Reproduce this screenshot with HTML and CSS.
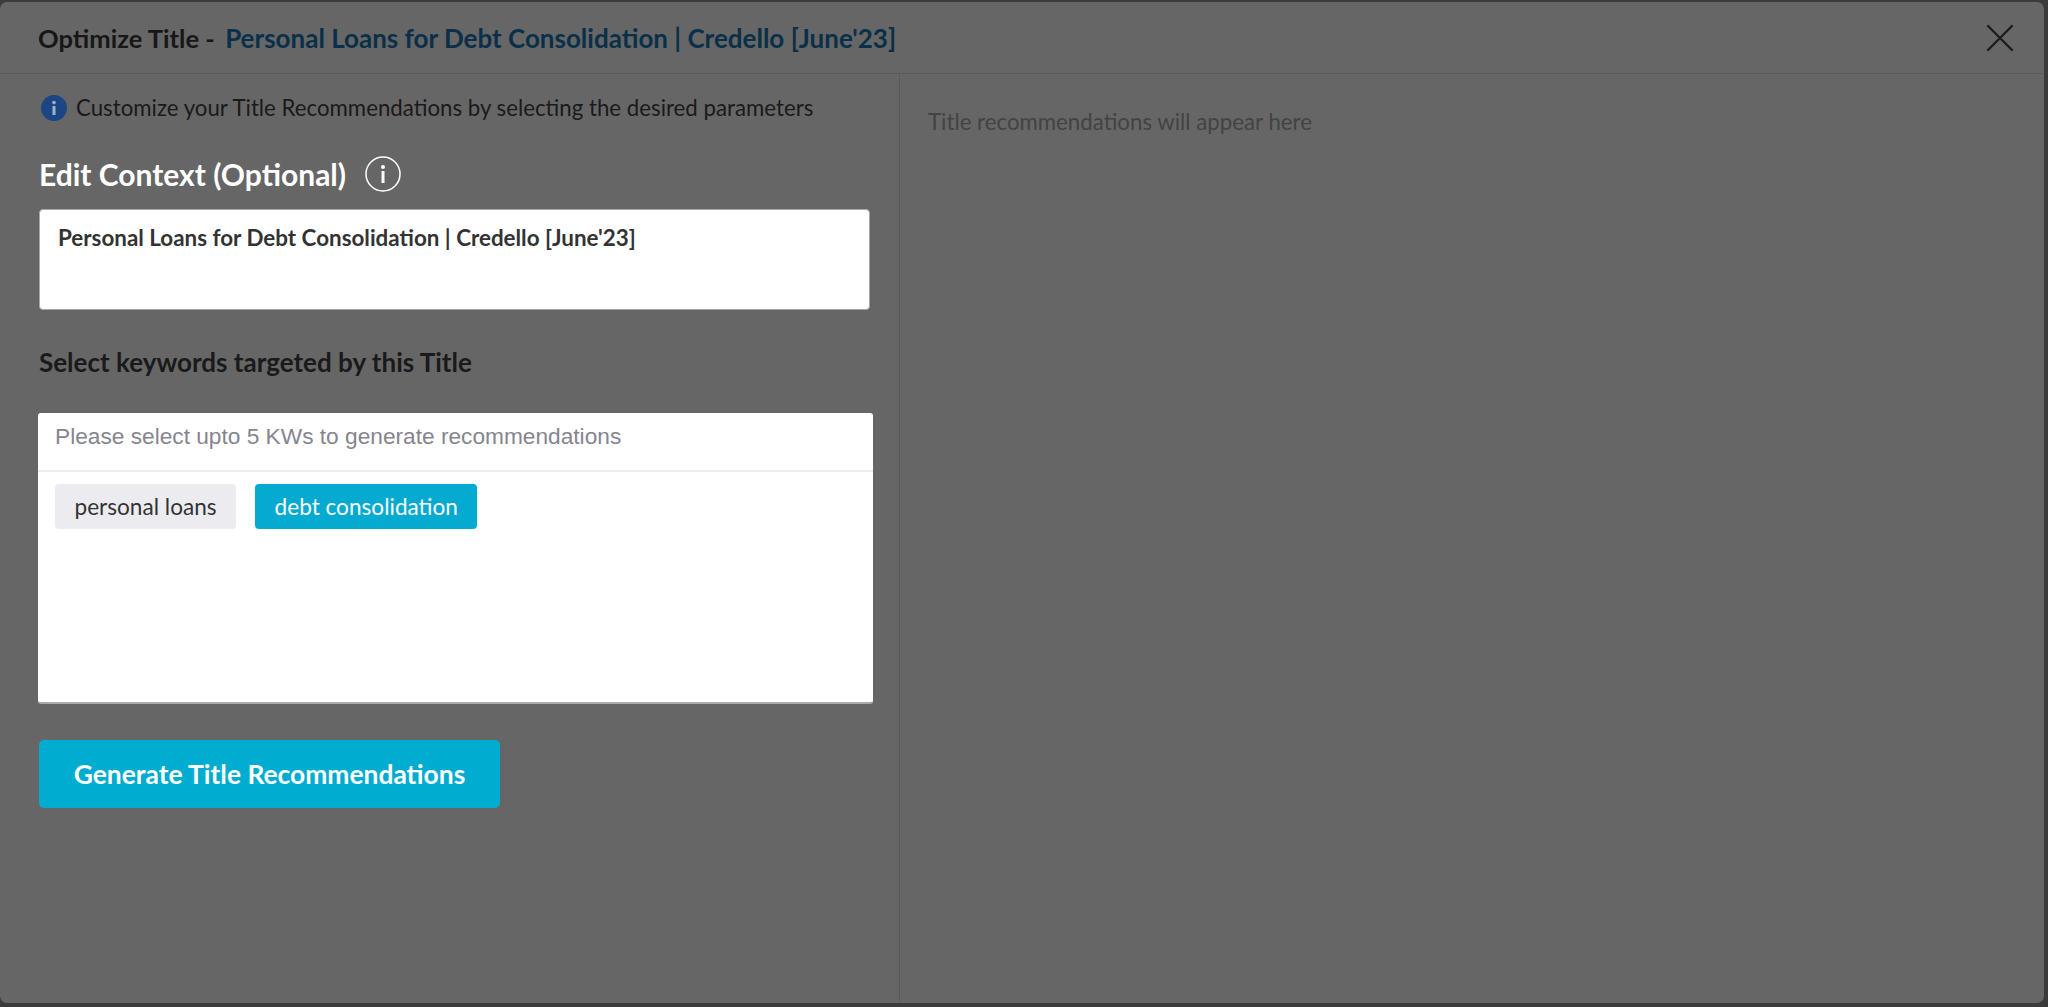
FILE: index.html
```html
<!DOCTYPE html>
<html lang="en">
<head>
<meta charset="utf-8">
<title>Optimize Title</title>
<link rel="stylesheet" href="styles.css">
</head>
<body>
<div class="modal">
  <header class="modal-header">
    <h1 class="modal-title"><span class="title-prefix">Optimize Title - </span><span class="title-link">Personal Loans for Debt Consolidation | Credello [June'23]</span></h1>
    <button class="close" aria-label="Close">
      <svg width="28" height="28" viewBox="0 0 28 28"><path d="M2 2 L26 26 M26 2 L2 26" stroke="#1e1e1e" stroke-width="2.4" stroke-linecap="round" fill="none"/></svg>
    </button>
  </header>
  <div class="modal-body">
    <section class="left">
      <div class="hint">
        <svg class="hint-icon" width="26" height="26" viewBox="0 0 26 26"><circle cx="13" cy="13" r="13" fill="#1b4683"/><circle cx="13" cy="7.6" r="1.8" fill="#9fb2cc"/><rect x="11.5" y="11" width="3" height="9" rx=".6" fill="#9fb2cc"/></svg>
        <span>Customize your Title Recommendations by selecting the desired parameters</span>
      </div>
      <div class="context-head">
        <h2 class="context-title">Edit Context (Optional)</h2>
        <svg width="36" height="36" viewBox="0 0 36 36"><circle cx="18" cy="18" r="17" fill="none" stroke="#fff" stroke-width="1.5"/><circle cx="18" cy="11" r="2" fill="#fff"/><rect x="16.5" y="15" width="3" height="12" fill="#fff"/></svg>
      </div>
      <div class="context-box">Personal Loans for Debt Consolidation | Credello [June'23]</div>
      <h2 class="kw-title">Select keywords targeted by this Title</h2>
      <div class="kw-box">
        <div class="kw-head">Please select upto 5 KWs to generate recommendations</div>
        <div class="chips">
          <span class="chip">personal loans</span>
          <span class="chip chip-on">debt consolidation</span>
        </div>
      </div>
      <button class="generate">Generate Title Recommendations</button>
    </section>
    <section class="right">Title recommendations will appear here</section>
  </div>
</div>
</body>
</html>
```
FILE: styles.css
```css
* { box-sizing: border-box; }
html, body { height: 100%; }
body {
  margin: 0;
  padding: 2px 4px 4px 0;
  background: #3b3b3b;
  font-family: Lato, "Open Sans", sans-serif;
  overflow: hidden;
}
.modal {
  height: 100%;
  background: #666;
  border-radius: 7px;
  display: flex;
  flex-direction: column;
}
.modal-header {
  height: 72px;
  flex: none;
  display: flex;
  align-items: center;
  justify-content: space-between;
  padding: 0 30px 0 38px;
  border-bottom: 1px solid #5a5a5a;
}
.modal-title {
  margin: 0;
  font-size: 26px;
  font-weight: 700;
  color: #171717;
}
.title-prefix { font-size: 25.6px; }
.title-link { color: #0a3049; margin-left: 4px; }
.close {
  background: none;
  border: 0;
  padding: 0;
  display: flex;
}
.modal-body { flex: 1; display: flex; }
.left {
  width: 900px;
  flex: none;
  padding: 20px 0 0 39px;
  border-right: 1px solid #5a5a5a;
}
.hint {
  display: flex;
  align-items: center;
  gap: 9px;
  margin-left: 2px;
  font-size: 22.25px;
  color: #1a1a1a;
}
.context-head {
  display: flex;
  align-items: center;
  gap: 19px;
  margin-top: 35px;
}
.context-title {
  margin: 0;
  font-size: 30px;
  font-weight: 700;
  color: #fff;
}
.context-box {
  width: 831px;
  height: 101px;
  margin-top: 17px;
  padding: 14px 18px;
  background: #fff;
  border: 1px solid #a8a8a8;
  border-radius: 4px;
  font-size: 22.4px;
  font-weight: 700;
  color: #333;
}
.kw-title {
  margin: 36px 0 0;
  font-size: 26px;
  font-weight: 700;
  color: #1a1a1a;
}
.kw-box {
  width: 835px;
  height: 291px;
  margin: 35px 0 0 -1px;
  background: #fff;
  border-bottom: 2px solid #aaa;
  border-radius: 3px;
}
.kw-head {
  height: 59px;
  padding: 10px 17px 0;
  border-bottom: 2px solid #ededf1;
  font-family: "Liberation Sans", Arial, sans-serif;
  font-size: 22.7px;
  color: #85858f;
}
.chips { display: flex; gap: 19px; padding: 12px 17px; }
.chip {
  height: 45px;
  display: flex;
  align-items: center;
  padding: 0 19.5px;
  background: #ececf0;
  border-radius: 4px;
  font-size: 22.6px;
  color: #333;
}
.chip-on { background: #04aad0; color: #fff; }
.generate {
  display: block;
  width: 461px;
  height: 68px;
  margin-top: 36px;
  background: #00acd0;
  border: 0;
  border-radius: 5px;
  font-family: inherit;
  font-size: 26.4px;
  font-weight: 700;
  color: #fff;
}
.right {
  flex: 1;
  padding: 34px 0 0 28px;
  font-size: 22.25px;
  color: #434343;
}
```
